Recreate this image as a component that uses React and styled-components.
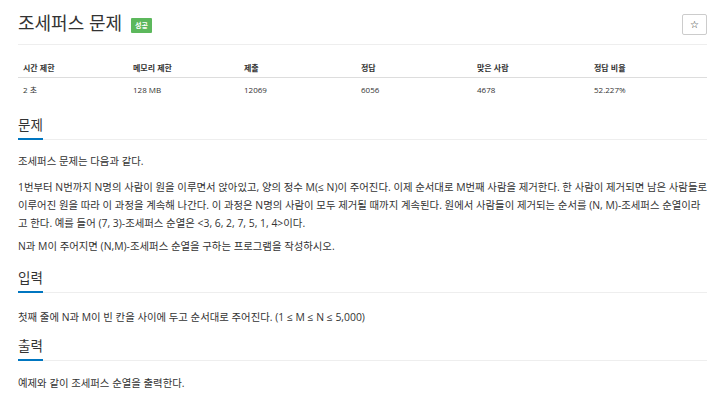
import React from "react";
import styled, { createGlobalStyle } from "styled-components";

const Global = createGlobalStyle`
  html, body { margin: 0; padding: 0; background: #fff; }
  body {
    font-family: "Open Sans", "Noto Sans CJK KR", sans-serif;
    color: #333;
  }
`;

const Page = styled.div`
  padding: 0 13px 0 18px;
`;

const TitleBar = styled.div`
  display: flex;
  align-items: center;
  height: 45px;
  border-bottom: 1px solid #eee;
  box-sizing: border-box;
  padding-top: 2px;
`;

const Title = styled.h1`
  margin: 0;
  font-size: 18px;
  font-weight: 400;
  color: #333;
  line-height: 1;
`;

const Badge = styled.span`
  display: inline-flex;
  align-items: center;
  justify-content: center;
  margin-left: 9px;
  margin-top: 4px;
  width: 21px;
  height: 15px;
  background: #5cb85c;
  color: #fff;
  font-size: 7px;
  font-weight: 700;
  border-radius: 1px;
`;

const StarButton = styled.button`
  margin-left: auto;
  align-self: flex-start;
  margin-top: 12px;
  width: 25px;
  height: 21px;
  border: 1px solid #ccc;
  border-radius: 2px;
  background: #fff;
  color: #222;
  font-size: 10px;
  font-weight: 700;
  padding: 0;
  display: flex;
  align-items: center;
  justify-content: center;
  font-family: "DejaVu Sans", sans-serif;
`;

const Table = styled.div`
  margin-top: 12px;
  display: grid;
  grid-template-columns: 110px 111px 117px 116px 117px 1fr;
`;

const HeadCell = styled.div`
  padding: 0 5px;
  height: 20px;
  display: flex;
  align-items: center;
  font-size: 8px;
  font-weight: 700;
  color: #333;
  border-bottom: 1px solid #ddd;
`;

const Cell = styled.div`
  padding: 0 5px;
  height: 22px;
  display: flex;
  align-items: center;
  font-size: 8px;
  color: #333;
`;

const Section = styled.section`
  margin-top: ${(p) => p.$top}px;
`;

const SectionHead = styled.div`
  border-bottom: 1px solid #eee;
  display: flex;
`;

const SectionTitle = styled.h2`
  margin: 0;
  font-size: 13.5px;
  font-weight: 400;
  color: #333;
  line-height: 20px;
  padding-bottom: 3px;
  border-bottom: 2px solid #0076c0;
  margin-bottom: -1px;
`;

const Body = styled.div`
  padding-top: ${(p) => p.$pad ?? 12}px;
  font-size: 10.4px;
  line-height: 18px;
  color: #333;
`;

const Para = styled.p`
  margin: 0 0 ${(p) => p.$gap ?? 5}px 0;
`;

const headers = ["시간 제한", "메모리 제한", "제출", "정답", "맞은 사람", "정답 비율"];
const values = ["2 초", "128 MB", "12069", "6056", "4678", "52.227%"];

export default function App() {
  return (
    <>
      <Global />
      <Page>
        <TitleBar>
          <Title>조세퍼스 문제</Title>
          <Badge>성공</Badge>
          <StarButton>☆</StarButton>
        </TitleBar>
        <Table>
          {headers.map((h) => (
            <HeadCell key={h}>{h}</HeadCell>
          ))}
          {values.map((v) => (
            <Cell key={v}>{v}</Cell>
          ))}
        </Table>
        <Section $top={15}>
          <SectionHead>
            <SectionTitle>문제</SectionTitle>
          </SectionHead>
          <Body $pad={12}>
            <Para $gap={8}>조세퍼스 문제는 다음과 같다.</Para>
            <Para $gap={5}>
              1번부터 N번까지 N명의 사람이 원을 이루면서 앉아있고, 양의 정수 M(≤ N)이 주어진다. 이제 순서대로 M번째 사람을 제거한다. 한 사람이 제거되면 남은 사람들로 이루어진 원을 따라 이 과정을 계속해 나간다. 이 과정은 N명의 사람이 모두 제거될 때까지 계속된다. 원에서 사람들이 제거되는 순서를 (N, M)-조세퍼스 순열이라고 한다. 예를 들어 (7, 3)-조세퍼스 순열은 &lt;3, 6, 2, 7, 5, 1, 4&gt;이다.
            </Para>
            <Para $gap={0}>N과 M이 주어지면 (N,M)-조세퍼스 순열을 구하는 프로그램을 작성하시오.</Para>
          </Body>
        </Section>
        <Section $top={13}>
          <SectionHead>
            <SectionTitle>입력</SectionTitle>
          </SectionHead>
          <Body $pad={15}>
            <Para $gap={0}>첫째 줄에 N과 M이 빈 칸을 사이에 두고 순서대로 주어진다. (1 ≤ M ≤ N ≤ 5,000)</Para>
          </Body>
        </Section>
        <Section $top={10}>
          <SectionHead>
            <SectionTitle>출력</SectionTitle>
          </SectionHead>
          <Body $pad={13}>
            <Para $gap={0}>예제와 같이 조세퍼스 순열을 출력한다.</Para>
          </Body>
        </Section>
      </Page>
    </>
  );
}
